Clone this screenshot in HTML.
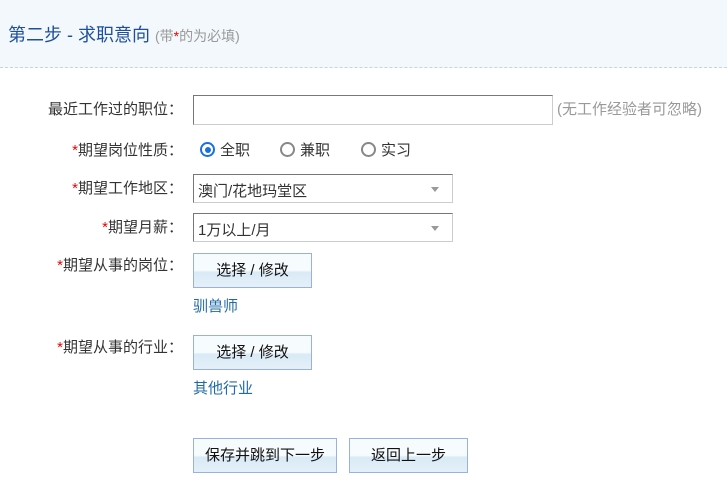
<!DOCTYPE html>
<html><head><meta charset="utf-8"><style>
*{margin:0;padding:0;box-sizing:border-box}
body{width:727px;height:485px;background:#fff;font-family:"Liberation Sans","Noto Sans CJK SC",sans-serif;font-size:15px;color:#333;position:relative;overflow:hidden}
.hd{position:absolute;left:0;top:0;width:727px;height:68px;background:#f3f8fc;border-bottom:1px dashed #c8d4de}
.hd .t{position:absolute;left:8px;top:21px;font-size:18px;color:#1d4f9c}
.hd .t span{font-size:14px;color:#999}
.r{color:#e00}
.lab{position:absolute;right:544px;white-space:nowrap;line-height:18px}
.abs{position:absolute;line-height:18px}
.inp{position:absolute;left:193px;border:1px solid #777;border-right-color:#ccc;border-bottom-color:#ccc;background:#fff}
.sel{position:absolute;left:193px;width:260px;height:29px;border:1px solid #777;border-right-color:#ccc;border-bottom-color:#ccc;background:#fff;padding:5px 0 0 4px}
.sel:after{content:"";position:absolute;right:13px;top:12px;border:4px solid transparent;border-top:5px solid #999}
.btn{position:absolute;border:1px solid #9ab0dd;background:linear-gradient(#f6fbfe 0%,#f6fbfe 50%,#d9eaf6 55%,#e4f0f9 100%);text-align:center;line-height:33px;color:#111}
.rad{position:absolute;top:142px;width:15px;height:15px;border:2px solid #888;border-radius:50%}
.rad.on{border-color:#1a6fe0}
.rad.on:after{content:"";position:absolute;left:2.5px;top:2.5px;width:6px;height:6px;border-radius:50%;background:#1a6fe0}
.lnk{position:absolute;left:193px;color:#1f6aa8;line-height:18px}
</style></head><body>
<div class="hd"><div class="t">第二步 - 求职意向 <span>(带<b class="r" style="font-weight:normal">*</b>的为必填)</span></div></div>

<div class="lab" style="top:101px">最近工作过的职位：</div>
<div class="inp" style="top:95px;width:360px;height:30px"></div>
<div class="abs" style="left:557px;top:101px;color:#999">(无工作经验者可忽略)</div>

<div class="lab" style="top:142px"><span class="r">*</span>期望岗位性质：</div>
<div class="rad on" style="left:200px"></div><div class="abs" style="left:220px;top:142px">全职</div>
<div class="rad" style="left:280px"></div><div class="abs" style="left:300px;top:142px">兼职</div>
<div class="rad" style="left:361px"></div><div class="abs" style="left:381px;top:142px">实习</div>

<div class="lab" style="top:180px"><span class="r">*</span>期望工作地区：</div>
<div class="sel" style="top:174px">澳门/花地玛堂区</div>

<div class="lab" style="top:219px"><span class="r">*</span>期望月薪：</div>
<div class="sel" style="top:213px">1万以上/月</div>

<div class="lab" style="top:257px"><span class="r">*</span>期望从事的岗位：</div>
<div class="btn" style="left:193px;top:253px;width:119px;height:35px">选择 / 修改</div>
<div class="lnk" style="top:298px">驯兽师</div>

<div class="lab" style="top:339px"><span class="r">*</span>期望从事的行业：</div>
<div class="btn" style="left:193px;top:335px;width:119px;height:35px">选择 / 修改</div>
<div class="lnk" style="top:380px">其他行业</div>

<div class="btn" style="left:193px;top:438px;width:144px;height:35px">保存并跳到下一步</div>
<div class="btn" style="left:349px;top:438px;width:119px;height:35px">返回上一步</div>
</body></html>
